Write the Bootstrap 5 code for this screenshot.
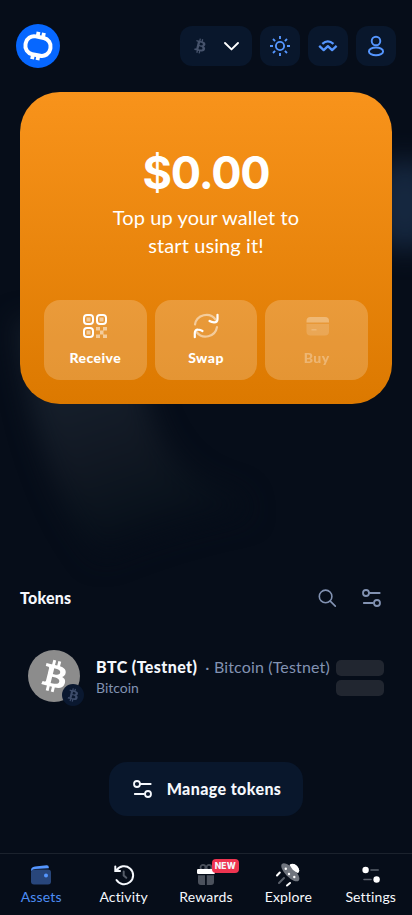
<!DOCTYPE html>
<html lang="en" data-bs-theme="dark">
<head>
<meta charset="utf-8">
<meta name="viewport" content="width=device-width, initial-scale=1">
<title>Wallet</title>
<link href="https://cdn.jsdelivr.net/npm/bootstrap@5.3.0/dist/css/bootstrap.min.css" rel="stylesheet">
<style>
body{background:#060d19;color:#f5f8fd;font-family:Lato,"Open Sans",sans-serif;height:915px;overflow:hidden}
svg{display:block;flex:none}
.screen{height:915px;position:relative;isolation:isolate}
.glow{position:absolute;inset:0;z-index:-1;width:412px;height:915px}
.top-bar{height:92px;padding:24px 16px}
.chip{width:40px;height:40px;border-radius:12px;background:#09172c;border:0;color:#5596ff;padding:0}
.chip-wide{width:72px}
.balance{margin:0 20px;height:312px;border-radius:40px;background:linear-gradient(#f8931b,#dc7900);padding:54px 24px 24px}
.amount{font:700 45px/54px Inter,sans-serif;letter-spacing:-1.2px}
.hint{font-size:20px;line-height:28px;margin-top:3px;letter-spacing:.1px}
.action{height:80px;border-radius:16px;background:rgba(255,255,255,.2);border:0;color:#fff;padding:10px 0 0;font-size:14px;font-weight:900;line-height:20px;letter-spacing:.45px}
.action span{margin-top:6px}
.action.dim>*{opacity:.3}
.tokens-head{margin-top:178px;padding:0 28px 0 20px;height:32px}
.t16{font-size:16px;line-height:22px}
.heavy{font-weight:900;letter-spacing:.4px}
.tokens-head .heavy{letter-spacing:.2px}
.muted{color:#8292b2}
.token-row{margin:26px 20px 0;height:72px;padding:0 8px}
.token-name{padding-top:1px}
.token-kind{font-size:14px;line-height:20px}
.token-full{letter-spacing:.15px}
.bones{padding-top:4px}
.coin{width:52px;height:52px;border-radius:50%;background:#8c8c8c;position:relative}
.net{position:absolute;left:34px;top:34px;width:22px;height:22px;border-radius:50%;background:#0a1830;color:#3d4c6b}
.bone{width:48px;height:16px;border-radius:5px;background:#212630}
.manage{width:194px;height:54px;border-radius:18px;background:#09172c;border:0;margin-top:50px;color:#f5f8fd}
.tabs{height:62px;border-top:1px solid #1b222d;background:#060d19;padding-top:9px}
.tab-item{width:20%;font-size:14px;line-height:20px;position:relative;letter-spacing:.15px}
.tab-item.active{color:#4d8df5}
.tag-new{position:absolute;left:47px;top:-4px;width:27px;height:14px;border-radius:4px;background:#ee3450;font:800 8.5px/14px Inter,sans-serif;text-align:center}
</style>
<script src="https://cdn.jsdelivr.net/npm/bootstrap@5.3.0/dist/js/bootstrap.bundle.min.js"></script>
</head>
<body>
<svg width="0" height="0" class="position-absolute">
 <symbol id="btc" viewBox="0 0 32 32"><path fill="currentColor" fill-rule="evenodd" d="M23.189 14.02c.314-2.096-1.283-3.223-3.465-3.975l.708-2.84-1.728-.43-.69 2.765c-.454-.114-.92-.22-1.385-.326l.695-2.783L15.596 6l-.708 2.839c-.376-.086-.746-.17-1.104-.26l.002-.009-2.384-.595-.46 1.846s1.283.294 1.256.312c.7.175.826.638.805 1.006l-.806 3.235c.048.012.11.03.18.057l-.183-.045-1.13 4.532c-.086.212-.303.531-.793.41.018.025-1.256-.313-1.256-.313l-.858 1.978 2.25.561c.418.105.828.215 1.231.318l-.715 2.872 1.727.43.708-2.84c.472.127.93.245 1.378.357l-.706 2.828 1.728.43.715-2.866c2.948.558 5.164.333 6.097-2.333.752-2.146-.037-3.385-1.588-4.192 1.13-.26 1.98-1.003 2.207-2.538zm-3.95 5.538c-.533 2.147-4.148.986-5.32.695l.95-3.805c1.172.293 4.929.872 4.37 3.11zm.535-5.569c-.487 1.953-3.495.96-4.47.717l.86-3.45c.975.243 4.118.696 3.61 2.733z"/></symbol>
 <symbol id="sliders" viewBox="0 0 24 24"><g fill="none" stroke="currentColor" stroke-width="1.8" stroke-linecap="round"><circle cx="6" cy="7" r="3"/><path d="M9.500 7h10.200M3.800 17H13"/><circle cx="17" cy="17" r="3"/></g></symbol>
</svg>
<div class="screen d-flex flex-column">
 <svg class="glow" viewBox="0 0 412 915">
  <defs><filter id="soft" x="-60%" y="-60%" width="220%" height="220%" color-interpolation-filters="sRGB"><feGaussianBlur stdDeviation="13"/></filter>
  <linearGradient id="fade" x1="70" y1="400" x2="120" y2="550" gradientUnits="userSpaceOnUse"><stop stop-color="#151e2a"/><stop offset=".4" stop-color="#111823"/><stop offset=".75" stop-color="#0a131d"/><stop offset="1" stop-color="#060d19"/></linearGradient></defs>
  <path filter="url(#soft)" fill="url(#fade)" d="M16 320H136C142 420 165 480 240 494L250 515Q170 530 100 560Q35 480 16 320Z"/>
  <ellipse filter="url(#soft)" cx="405" cy="205" rx="34" ry="46" fill="#15273f"/>
 </svg>

 <header class="top-bar d-flex align-items-center justify-content-between">
  <svg width="44" height="44" viewBox="0 0 44 44"><circle cx="22" cy="22" r="22" fill="#0667ff"/><g transform="rotate(11 22 22)"><rect x="9.400" y="13" width="25.200" height="18.200" rx="8.500" fill="none" stroke="#fff" stroke-width="4"/><path d="M19.800 8v4M25.300 8v4M18.700 32v4M24.200 32v4" stroke="#fff" stroke-width="3.800"/></g></svg>
  <div class="d-flex gap-2">
   <button class="chip chip-wide d-flex align-items-center" aria-label="Network"><svg class="ms-2" width="24" height="24" style="color:#46536c"><use href="#btc"/></svg><svg class="ms-2" width="24" height="24" viewBox="0 0 24 24" fill="none" stroke="#fff" stroke-width="1.900" stroke-linecap="round" stroke-linejoin="round"><path d="M5 9l6.500 6.400L18 9"/></svg></button>
   <button class="chip d-flex align-items-center justify-content-center" aria-label="Theme"><svg width="24" height="24" viewBox="0 0 24 24" fill="none" stroke="currentColor" stroke-width="1.900"><circle cx="12" cy="12" r="4.100"/><path d="M12 2v3M12 19v3M2 12h3M19 12h3M5 5l2.100 2.100M16.900 16.900L19 19M19 5l-2.100 2.100M7.100 16.900L5 19"/></svg></button>
   <button class="chip d-flex align-items-center justify-content-center" aria-label="Connections"><svg width="24" height="24" viewBox="0 0 24 24" fill="none" stroke="currentColor" stroke-width="2.300" stroke-linejoin="round"><path d="M6.300 9.800Q11.800 5 17.500 9.800M3.200 11.800l4.500 4.300 4.200-4 4.200 4 4.500-4.300"/></svg></button>
   <button class="chip d-flex align-items-center justify-content-center" aria-label="Account"><svg width="24" height="24" viewBox="0 0 24 24" fill="none" stroke="currentColor" stroke-width="1.900"><circle cx="12" cy="7" r="4.300"/><ellipse cx="12" cy="17.400" rx="7.100" ry="3.900"/></svg></button>
  </div>
 </header>

 <section class="balance text-center text-white d-flex flex-column">
  <div class="amount">$0.00</div>
  <div class="hint">Top up your wallet to<br>start using it!</div>
  <div class="d-flex gap-2 mt-auto">
   <button class="action flex-fill w-100 d-flex flex-column align-items-center"><svg width="32" height="32" viewBox="0 0 32 32"><g fill="none" stroke="#fff" stroke-width="2"><rect x="5" y="5" width="9" height="9" rx="3"/><rect x="18" y="5" width="9" height="9" rx="3"/><rect x="5" y="18" width="9" height="9" rx="3"/></g><path fill="#fff" fill-opacity=".5" d="M7.500 7.500h4v4h-4zM20.500 7.500h4v4h-4zM7.500 20.500h4v4h-4zM17 17h4v3.500h-4zM24 17h4v3.500h-4zM21 20.500h3.500v4H21zM17 24.500h4V28h-4zM24 24.500h4V28h-4z"/></svg><span>Receive</span></button>
   <button class="action flex-fill w-100 d-flex flex-column align-items-center"><svg width="32" height="32" viewBox="0 0 32 32" fill="none" stroke="#fff" stroke-width="2.200" stroke-linecap="round" stroke-linejoin="round"><g stroke-opacity=".5"><path d="M5 14.500A11.500 11.500 0 0 1 25.500 9.500"/><path d="M27 17A11.500 11.500 0 0 1 6.500 22"/></g><path d="M27.500 4.800V9Q27.500 12.500 24 12.300Q21.500 12.200 19.500 11M4.800 27.200V23Q4.800 19.500 8 19.700Q10.500 19.800 12.500 21"/></svg><span>Swap</span></button>
   <button class="action dim flex-fill w-100 d-flex flex-column align-items-center" disabled><svg width="32" height="32" viewBox="0 0 32 32" fill="#fff"><path d="M5.500 12.500V11Q5.500 7 9.500 7H24Q28 7 28 11V12.500Z"/><path fill-opacity=".5" d="M5.500 14H28V21.500Q28 25.500 24 25.500H9.500Q5.500 25.500 5.500 21.500Z"/><path d="M10.500 19h5v1.500h-5z"/></svg><span>Buy</span></button>
  </div>
 </section>

 <div class="tokens-head d-flex align-items-center justify-content-between">
  <span class="t16 heavy">Tokens</span>
  <div class="d-flex muted"><svg width="24" height="24" viewBox="0 0 24 24" fill="none" stroke="currentColor" stroke-width="1.600" stroke-linecap="round"><circle cx="10.600" cy="10.400" r="6.300"/><path d="M15.300 15.100l5 5"/></svg><svg width="24" height="24" style="margin-left:21px"><use href="#sliders"/></svg></div>
 </div>

 <div class="token-row d-flex align-items-center">
  <div class="coin flex-shrink-0"><svg width="52" height="52" class="text-white"><use href="#btc"/></svg><span class="net"><svg width="22" height="22"><use href="#btc"/></svg></span></div>
  <div class="token-name ms-3 flex-grow-1 text-nowrap">
   <div class="t16 d-flex"><span class="heavy">BTC (Testnet)</span><span class="token-full muted ps-2">· Bitcoin (Testnet)</span></div>
   <div class="token-kind muted">Bitcoin</div>
  </div>
  <div class="bones d-flex flex-column gap-1"><span class="bone"></span><span class="bone"></span></div>
 </div>

 <button class="manage d-flex align-items-center justify-content-center mx-auto"><svg width="24" height="24" class="me-2"><use href="#sliders"/></svg><span class="t16 heavy ps-1">Manage tokens</span></button>

 <nav class="tabs d-flex mt-auto">
  <div class="tab-item active d-flex flex-column align-items-center"><svg width="24" height="24" viewBox="0 0 24 24"><rect x="2" y="6.500" width="20" height="15" rx="3" fill="#28467b"/><path fill="#5596ff" d="M2 7.500Q2 4 6 3.600L17.500 2.200Q19.800 2 19.800 4.200V5.300L6 6Q4 6 2 8Z"/><circle cx="17" cy="12.500" r="2" fill="#5596ff"/></svg>Assets</div>
  <div class="tab-item d-flex flex-column align-items-center"><svg width="24" height="24" viewBox="0 0 24 24" fill="none" stroke="#f5f8fd" stroke-width="2" stroke-linecap="round"><path d="M4.500 7.500A9 9 0 1 1 4.500 17M3.300 3.500v4.500H8"/><path stroke="#555c68" d="M11.700 8.500v4l2.600 2.300"/></svg>Activity</div>
  <div class="tab-item d-flex flex-column align-items-center"><svg width="24" height="24" viewBox="0 0 24 24"><g fill="none" stroke="#4b515c" stroke-width="1.700"><circle cx="9" cy="4.400" r="2.500"/><circle cx="15" cy="4.400" r="2.500"/></g><rect x="3" y="6" width="18" height="5" rx="1.300" fill="#fff"/><path fill="#4b515c" d="M4 12.300h7V22H7Q4 22 4 19zM12.800 12.300H20V19Q20 22 17 22h-4.200z"/></svg><span class="tag-new">NEW</span>Rewards</div>
  <div class="tab-item d-flex flex-column align-items-center"><svg width="28" height="24" viewBox="0 0 28 24"><g stroke-linecap="round" stroke-width="2"><path d="M3 12.500L5.800 9.500M13 22.500l3-2.500" stroke="#fff"/><path d="M5 20l5-5" stroke="#5b616c"/></g><path fill="#fff" d="M15.500 2Q19-1 23 3Q26.500 7 24 10Q21 10 18 7Z"/><ellipse cx="16.300" cy="9.300" rx="11.800" ry="4.900" transform="rotate(45 16.300 9.300)" fill="#70757e"/><path fill="#fff" d="M16 1.800Q19.500-.500 23 3Q26.500 7 24.500 9.500Q21.500 9.500 18.800 6.800Q16.500 4.500 16 1.800Z"/><g fill="#fff"><circle cx="11.800" cy="5.700" r="1.200"/><circle cx="15" cy="11" r="1.200"/><circle cx="20.300" cy="14" r="1.200"/></g></svg>Explore</div>
  <div class="tab-item d-flex flex-column align-items-center"><svg width="24" height="24" viewBox="0 0 24 24"><path d="M12 7h7.200M5 16.500h7" stroke="#5b616c" stroke-width="1.600" stroke-linecap="round"/><circle cx="6.600" cy="7" r="3.200" fill="#fff"/><circle cx="17.600" cy="16.500" r="3.200" fill="#fff"/></svg>Settings</div>
 </nav>
</div>
</body>
</html>
